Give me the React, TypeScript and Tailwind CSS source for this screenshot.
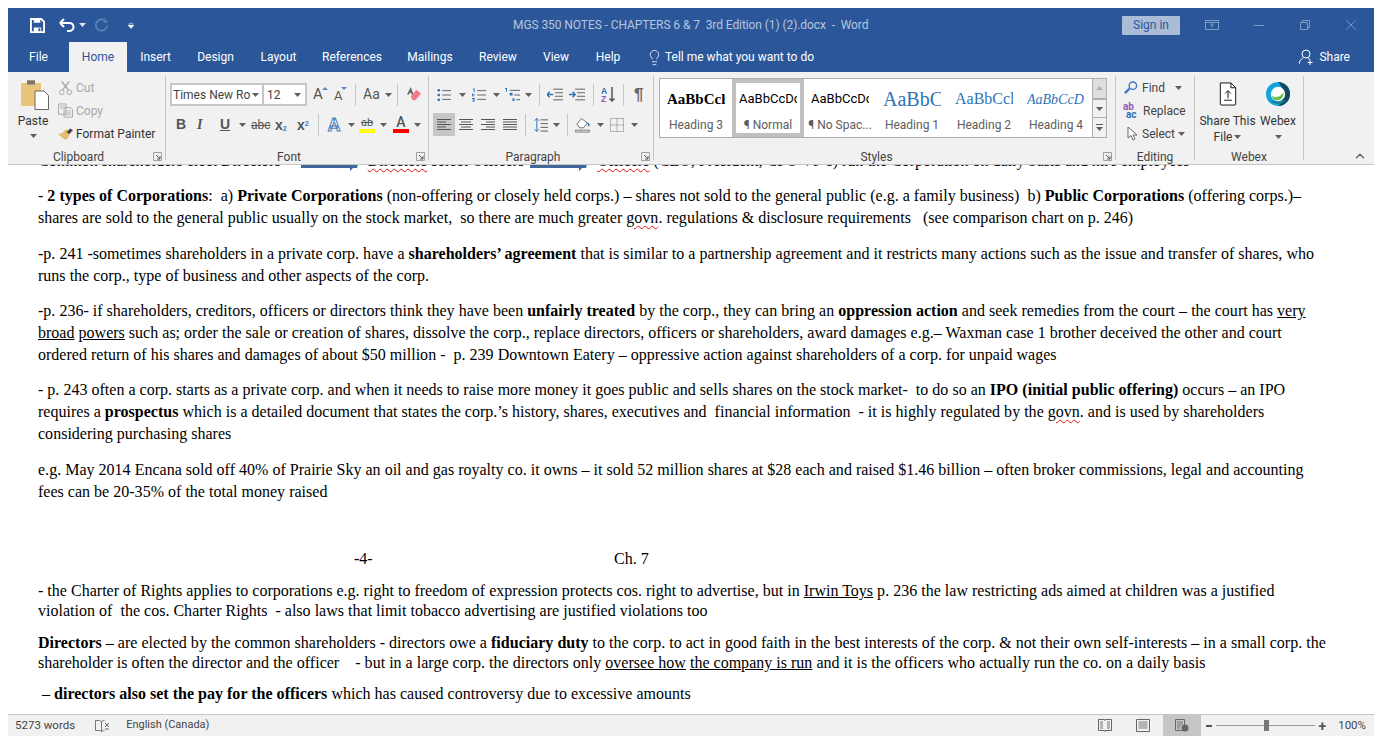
import React from "react";
import { Lightbulb, ChevronUp } from "lucide-react";

const Caret = ({ c = "#5f5f5f" }: { c?: string }) => (
  <svg width="7" height="4" viewBox="0 0 7 4" className="shrink-0"><path d="M0 0h7L3.5 4z" fill={c} /></svg>
);

const Launcher = () => (
  <svg width="9" height="9" viewBox="0 0 9 9" className="shrink-0"><path d="M.5 8.5v-8h8v8z" fill="none" stroke="#a0a0a0" /><path d="M3 3l4 4M7 4v3H4" fill="none" stroke="#5a5a5a" /></svg>
);

const Divider = () => <div className="w-px h-[22px] bg-[#c6c6c6] shrink-0" />;

const GroupLabel = ({ children, launcher }: { children: React.ReactNode; launcher?: boolean }) => (
  <div className={`h-[16px] -mb-[4px] pt-[1px] flex items-center justify-center relative text-[12px] text-[#444] shrink-0 ${launcher ? "pr-[16px]" : ""}`}>
    {children}
    {launcher && <span className="absolute right-[3px] top-[4px] flex"><Launcher /></span>}
  </div>
);

const Group = ({ w, label, launcher, children }: { w: string; label: string; launcher?: boolean; children: React.ReactNode }) => (
  <div className={`${w} shrink-0 flex flex-col border-r border-[#c6c6c6] mt-[4px] mb-[4px]`}>
    <div className="flex-1 min-h-0">{children}</div>
    <GroupLabel launcher={launcher}>{label}</GroupLabel>
  </div>
);

const Lines = ({ x = 0, w = 14, ys, c = "#555" }: { x?: number; w?: number; ys: number[]; c?: string }) => (
  <>{ys.map((y) => <path key={y} d={`M${x} ${y + 0.5}h${w}`} stroke={c} fill="none" />)}</>
);

const StyleItem = ({ sample, label, cls, selected }: { sample: string; label: string; cls: string; selected?: boolean }) => (
  <div className={`w-[72px] shrink-0 flex flex-col items-center overflow-hidden border-[4px] ${selected ? "border-[#c0c0c0]" : "border-transparent"}`}>
    <div className={`h-[34px] w-full flex items-center justify-center overflow-hidden whitespace-nowrap ${cls}`}><span className="block overflow-hidden w-[58px] text-left">{sample}</span></div>
    <div className="text-[12px] text-[#5c5c5c] leading-[16px] mt-[2px] whitespace-nowrap">{label}</div>
  </div>
);

const Tab = ({ children, w }: { children: React.ReactNode; w: string }) => (
  <div className={`h-[30px] flex items-center justify-center text-[12px] whitespace-nowrap text-white ${w}`}>{children}</div>
);

const Arrow = ({ cls }: { cls: string }) => (
  <svg width="57" height="8" viewBox="0 0 57 8" className={`inline-block align-baseline relative top-[6px] ${cls}`}><path d="M0 0h57l-1 4h-4l-3 3V4H0z" fill="#41689b" /></svg>
);

const W = ({ children }: { children: React.ReactNode }) => (
  <span className="underline decoration-wavy decoration-[#e01010] decoration-1 underline-offset-2">{children}</span>
);
const U = ({ children }: { children: React.ReactNode }) => <span className="underline">{children}</span>;
const Line = ({ children }: { children: React.ReactNode }) => <div className="whitespace-pre">{children}</div>;

export default function App() {
  return (
    <div className="w-[1382px] h-[744px] bg-white overflow-hidden pt-[8px] px-[8px] pb-[8px] flex flex-col font-['Roboto','Noto_Sans',sans-serif]">
      {/* Title bar */}
      <div className="h-[34px] bg-[#2b579a] shrink-0 flex items-center relative">
        <div className="flex items-center pl-[22px]">
          <svg width="15" height="15" viewBox="0 0 16 16"><path d="M1 1h11l3 3v11H1z" fill="none" stroke="#fff" strokeWidth="2" /><path d="M4 1h7v4H4zM4 10h8v5H4z" fill="#fff" /><path d="M9 11h2v3H9z" fill="#2b579a" /></svg>
          <svg width="16" height="16" viewBox="0 0 16 16" className="ml-[14px]"><path d="M1 6l4-4M1 6l4 4M1 6h9a4 4 0 0 1 1 8H8" fill="none" stroke="#fff" strokeWidth="2" /></svg>
          <span className="ml-[4px]"><Caret c="#dfe6f0" /></span>
          <svg width="15" height="15" viewBox="0 0 16 16" className="ml-[8px]"><path d="M12 3a6 6 0 1 0 2 5M11 .5V4h3.500" fill="none" stroke="#5a7fb5" strokeWidth="2" /></svg>
          <svg width="6" height="7" viewBox="0 0 7 7" className="ml-[19px]"><path d="M1 1h5M0 3h7L3.500 7z" fill="#fff" stroke="#fff" strokeWidth=".6" /></svg>
        </div>
        <div className="absolute left-[505px] top-[8px] text-[12px] tracking-[-0.08px] text-[#b5c5dd] whitespace-pre">MGS 350 NOTES - CHAPTERS 6 &amp; 7  3rd Edition (1) (2).docx  -  Word</div>
        <div className="ml-auto flex items-center">
          <div className="w-[58px] h-[19px] bg-[#aabcd6] rounded-[1px] text-[#2b579a] text-[12px] flex items-center justify-center">Sign in</div>
          <svg width="14" height="10" viewBox="0 0 14 10" className="ml-[25px]"><path d="M.5.500h13v9H.500zM.500 2.500h13M7 8V4M5 5.500L7 3.500l2 2" fill="none" stroke="#7f9cc6" /></svg>
          <svg width="10" height="1" viewBox="0 0 10 1" className="ml-[35px]"><path d="M0 .5h10" stroke="#7f9cc6" /></svg>
          <svg width="10" height="10" viewBox="0 0 10 10" className="ml-[36px]"><path d="M.5 2.500h7v7h-7zM2.500 2.500v-2h7v7h-2" fill="none" stroke="#7f9cc6" /></svg>
          <svg width="10" height="10" viewBox="0 0 11 11" className="ml-[36px] mr-[18px]"><path d="M.5.500l10 10M10.500.500l-10 10" fill="none" stroke="#7f9cc6" /></svg>
        </div>
      </div>

      {/* Tabs */}
      <div className="h-[30px] bg-[#2b579a] shrink-0 flex items-center">
        <div className="w-[61px] text-center text-white text-[12px]">File</div>
        <div className="w-[58px] h-[30px] bg-[#f1f1f1] text-[#2b579a] text-[12px] flex items-center justify-center">Home</div>
        <Tab w="w-[57px]">Insert</Tab>
        <Tab w="w-[63px]">Design</Tab>
        <Tab w="w-[63px]">Layout</Tab>
        <Tab w="w-[84px]">References</Tab>
        <Tab w="w-[72px]">Mailings</Tab>
        <Tab w="w-[64px]">Review</Tab>
        <Tab w="w-[52px]">View</Tab>
        <Tab w="w-[52px]">Help</Tab>
        <div className="flex items-center text-white text-[12px] ml-[12px] whitespace-nowrap">
          <Lightbulb size={17} strokeWidth={1.1} className="mr-[2px]" />
          Tell me what you want to do
        </div>
        <div className="ml-auto mr-[24px] flex items-center text-white text-[12px]">
          <svg width="15" height="16" viewBox="0 0 15 16" className="mr-[5px]"><circle cx="7" cy="5" r="4" fill="none" stroke="#fff" /><path d="M0 15c.5-3 2-5 4-6M9 9c1 .3 1.500 1 2 2M11 11v5M8.500 13.500h5" fill="none" stroke="#fff" /></svg>
          Share
        </div>
      </div>

      {/* Ribbon */}
      <div className="h-[93px] bg-[#f1f1f1] shrink-0 flex border-b border-[#c6c6c6] text-[12px] text-[#444]">
        {/* Clipboard */}
        <Group w="w-[158px]" label="Clipboard" launcher>
          <div className="flex h-[72px]">
            <div className="w-[50px] flex flex-col items-center pt-[4px]">
              <svg width="28" height="30" viewBox="0 0 28 30" className="ml-[4px]"><path d="M0 3h6V0h8v3h6v23H0z" fill="#e9c57c" /><path d="M6 0.500h8V4.500H6z" fill="#777" /><path d="M14 11h9l4.500 4.500V29.500H14z" fill="#fff" stroke="#666" /></svg>
              <div className="mt-[3px] text-[#333] leading-[16px]">Paste</div>
              <div className="mt-[5px]"><Caret /></div>
            </div>
            <div className="flex flex-col">
              <div className="h-[23px] flex items-center text-[#a8a8a8]">
                <svg width="15" height="16" viewBox="0 0 16 16"><path d="M4 1l7 9M12 1L5 10" stroke="#a5a5a5" fill="none" strokeWidth="1.500" /><circle cx="4" cy="12.500" r="2.500" fill="none" stroke="#a5a5a5" /><circle cx="12" cy="12.500" r="2.500" fill="none" stroke="#a5a5a5" /></svg>
                <span className="ml-[3px]">Cut</span>
              </div>
              <div className="h-[23px] flex items-center text-[#a8a8a8]">
                <svg width="15" height="15" viewBox="0 0 16 15"><path d="M.5.500h8v11h-8zM6.500 4.500h7l2 2v8h-9z" fill="#f1f1f1" stroke="#a5a5a5" /><path d="M8 8h6M8 10h6M8 12h6M2 3h5M2 5h3" stroke="#b5b5b5" /></svg>
                <span className="ml-[3px]">Copy</span>
              </div>
              <div className="h-[23px] flex items-center text-[#333]">
                <svg width="15" height="14" viewBox="0 0 16 14"><path d="M9 2l5 3-4 7-3 1L0 7c3 0 5-1 7-4z" fill="#e6bd74" /><path d="M9 5l4-4 3 2-4 4z" fill="#444" /></svg>
                <span className="ml-[3px]">Format Painter</span>
              </div>
            </div>
          </div>
        </Group>

        {/* Font */}
        <Group w="w-[263px]" label="Font" launcher>
          <div className="flex flex-col pl-[4px] pt-[7px]">
            <div className="flex items-center h-[23px]">
              <div className="w-[94px] h-[23px] bg-white border-2 border-[#c6c6c6] flex items-center pl-[1px] pr-[3px] justify-between"><span className="text-[#444] whitespace-nowrap text-[12px] pt-[1px]">Times New Ro</span><Caret /></div>
              <div className="w-[43px] h-[23px] bg-white border-2 border-l-0 border-[#c6c6c6] flex items-center pl-[3px] pr-[4px] justify-between"><span className="text-[12px] pt-[1px]">12</span><Caret /></div>
              <div className="flex items-center ml-[6px] text-[#555]">
                <span className="text-[15px] leading-none relative w-[21px]">A<svg width="6" height="3" className="absolute left-[9px] top-[0px]"><path d="M0 3l3-3 3 3z" fill="#5b87c5" /></svg></span>
                <span className="text-[13px] leading-none relative w-[21px] mt-[2px]">A<svg width="6" height="3" className="absolute left-[7px] -top-[2px]"><path d="M0 0h6L3 3z" fill="#5b87c5" /></svg></span>
              </div>
              <div className="mr-[7px]"><Divider /></div>
              <span className="text-[14px] text-[#555] w-[22px]">Aa</span>
              <span className="w-[12px]"><Caret /></span>
              <Divider />
              <svg width="15" height="15" viewBox="0 0 16 16" className="ml-[9px]"><path d="M4 0l3 8H5L4 6H3L2 8H0z" fill="#666" /><path d="M4 10l6-7 5 4-6 7H6z" fill="#ee7b8a" /></svg>
            </div>
            <div className="flex items-center h-[23px] mt-[7px] pl-[6px] text-[#555]">
              <span className="w-[21px] font-bold font-['Liberation_Sans',sans-serif] text-[14px]">B</span>
              <span className="w-[23px] italic font-['Liberation_Serif',serif] font-bold text-[14px]">I</span>
              <span className="underline font-bold font-['Liberation_Sans',sans-serif] w-[19px] text-[14px]">U</span>
              <span className="w-[12px]"><Caret /></span>
              <span className="line-through w-[24px] text-[12px] leading-none">abc</span>
              <span className="w-[22px] font-bold font-['Liberation_Sans',sans-serif] text-[14px] leading-none">x<sub className="text-[7px] text-[#3f77c2]">2</sub></span>
              <span className="w-[21px] font-bold font-['Liberation_Sans',sans-serif] text-[14px] leading-none">x<sup className="text-[7px] text-[#3f77c2]">2</sup></span>
              <div className="mr-[9px]"><Divider /></div>
              <span className="font-bold text-[18px] leading-none text-white [-webkit-text-stroke:1px_#4f81bd] w-[20px]">A</span>
              <span className="w-[11px]"><Caret /></span>
              <div className="w-[16px] flex flex-col items-center mr-[5px] relative"><span className="text-[11px] leading-[12px] text-[#555] line-through">ab</span><div className="w-[16px] h-[4px] bg-[#ffff00]" /></div>
              <span className="w-[13px]"><Caret /></span>
              <div className="w-[16px] flex flex-col items-center mr-[5px]"><span className="text-[14px] leading-[13px] font-medium text-[#555]">A</span><div className="w-[16px] h-[4px] bg-[#ff0000]" /></div>
              <Caret />
            </div>
          </div>
        </Group>

        {/* Paragraph */}
        <Group w="w-[225px]" label="Paragraph" launcher>
          <div className="flex flex-col pl-[4px] pt-[7px]">
            <div className="flex items-center h-[23px] pl-[4px]">
              <svg width="14" height="14" viewBox="0 0 16 15"><g fill="#2b6fb8"><circle cx="2" cy="2" r="1.500" /><circle cx="2" cy="7.500" r="1.500" /><circle cx="2" cy="13" r="1.500" /></g><Lines x={6} w={10} ys={[2, 7, 12]} /></svg>
              <span className="ml-[8px] mr-[6px]"><Caret /></span>
              <svg width="14" height="14" viewBox="0 0 16 15"><g fill="#2b6fb8"><path d="M1 0h2v4H2V1H1zM0 6h3v1H1v1h2v1H0zM0 11h3v4H0v-1h2v-.5H1v-1h1V12H0z" /></g><Lines x={6} w={10} ys={[2, 7, 12]} /></svg>
              <span className="ml-[7px] mr-[5px]"><Caret /></span>
              <svg width="16" height="14" viewBox="0 0 17 15"><g fill="#2b6fb8"><path d="M0 0h2v4H1V1H0zM5 5h3v3H5zM8 11h2v3H8z" /></g><Lines x={5} w={11} ys={[2]} /><Lines x={10} w={6} ys={[7]} /><Lines x={12} w={4} ys={[12]} /></svg>
              <span className="ml-[4px] mr-[7px]"><Caret /></span>
              <Divider />
              <svg width="16" height="13" viewBox="0 0 18 13" className="ml-[7px]"><Lines x={7} w={11} ys={[0, 12]} /><Lines x={9} w={9} ys={[4, 8]} /><path d="M0 6.500h7M3 3.500L0 6.500l3 3" fill="none" stroke="#2b6fb8" strokeWidth="1.500" /></svg>
              <svg width="16" height="13" viewBox="0 0 18 13" className="ml-[6px] mr-[8px]"><Lines x={7} w={11} ys={[0, 12]} /><Lines x={9} w={9} ys={[4, 8]} /><path d="M0 6.500h7M4 3.500l3 3-3 3" fill="none" stroke="#2b6fb8" strokeWidth="1.500" /></svg>
              <Divider />
              <svg width="15" height="17" viewBox="0 0 15 17" className="ml-[7px]"><path d="M11 1v14M8.500 12.500L11 15l2.500-2.500" fill="none" stroke="#555" strokeWidth="1.500" /><text x="0" y="7.500" fontSize="8.500" fontWeight="700" fill="#2b6fb8" fontFamily="Liberation Sans">A</text><text x="0" y="16" fontSize="8.500" fontWeight="700" fill="#8e5bb5" fontFamily="Liberation Sans">Z</text></svg>
              <div className="ml-[7px] mr-[10px]"><Divider /></div>
              <span className="text-[17px] leading-none text-[#666] font-['Liberation_Sans',sans-serif] font-bold">¶</span>
            </div>
            <div className="flex items-center h-[23px] mt-[7px]">
              <div className="w-[22px] h-[23px] bg-[#c6c6c6] flex items-center justify-center"><svg width="14" height="11" viewBox="0 0 14 11"><Lines w={14} ys={[0, 5, 10]} /><Lines w={9} ys={[2.500, 7.500]} /></svg></div>
              <svg width="14" height="11" viewBox="0 0 14 11" className="ml-[4px]"><Lines w={14} ys={[0, 5, 10]} /><Lines x={2} w={10} ys={[2.500, 7.500]} /></svg>
              <svg width="14" height="11" viewBox="0 0 14 11" className="ml-[8px]"><Lines w={14} ys={[0, 5, 10]} /><Lines x={5} w={9} ys={[2.500, 7.500]} /></svg>
              <svg width="14" height="11" viewBox="0 0 14 11" className="ml-[8px] mr-[8px]"><Lines w={14} ys={[0, 2.500, 5, 7.500, 10]} /></svg>
              <Divider />
              <svg width="14" height="16" viewBox="0 0 15 16" className="ml-[8px]"><path d="M3 1v14M.5 3.500L3 1l2.500 2.500M.5 12.500L3 15l2.500-2.500" fill="none" stroke="#2b6fb8" /><Lines x={7} w={8} ys={[2, 6, 10, 14]} /></svg>
              <span className="ml-[5px] mr-[7px]"><Caret /></span>
              <Divider />
              <svg width="16" height="16" viewBox="0 0 17 16" className="ml-[7px]"><path d="M7 1l6 5-4 5H5L2 7z" fill="#fff" stroke="#666" /><path d="M13 5c2 1 3 3 2 5-1-1-2-3-2-5z" fill="#2b6fb8" /><path d="M.5 13.500h15v2H.500z" fill="none" stroke="#777" /></svg>
              <span className="ml-[6px] mr-[6px]"><Caret /></span>
              <svg width="14" height="14" viewBox="0 0 14 14"><path d="M.5.500h13v13H.500zM7 .500v13M.500 7h13" fill="none" stroke="#777" strokeDasharray="1 1" /></svg>
              <span className="ml-[7px]"><Caret /></span>
            </div>
          </div>
        </Group>

        {/* Styles */}
        <Group w="w-[462px]" label="Styles" launcher>
          <div className="flex pl-[5px] pt-[2px]">
            <div className="h-[60px] bg-white border border-[#aeaeae] flex">
              <StyleItem sample="AaBbCcl" label="Heading 3" cls="font-['Liberation_Serif',serif] font-bold text-[15px] text-black" />
              <StyleItem selected sample="AaBbCcDc" label="¶ Normal" cls="text-[13px] text-black" />
              <StyleItem sample="AaBbCcDc" label="¶ No Spac..." cls="text-[13px] text-black" />
              <StyleItem sample="AaBbC" label="Heading 1" cls="font-['Liberation_Serif',serif] text-[20px] text-[#2e74b5]" />
              <StyleItem sample="AaBbCcl" label="Heading 2" cls="font-['Liberation_Serif',serif] text-[16px] text-[#2e74b5]" />
              <StyleItem sample="AaBbCcD" label="Heading 4" cls="font-['Liberation_Serif',serif] italic text-[14px] text-[#2e74b5]" />
              <div className="w-[14px] border-l border-[#aeaeae] flex flex-col bg-[#f1f1f1]">
                <div className="h-[20px] bg-[#dedede] flex items-center justify-center border-t border-[#aeaeae] rotate-180"><Caret c="#b0b0b0" /></div>
                <div className="h-[19px] flex items-center justify-center border-b border-t border-[#aeaeae]"><Caret /></div>
                <div className="flex-1 flex flex-col items-center justify-center gap-[2px]"><div className="w-[7px] h-px bg-[#5f5f5f]" /><Caret /></div>
              </div>
            </div>
          </div>
        </Group>

        {/* Editing */}
        <Group w="w-[79px]" label="Editing">
          <div className="flex flex-col pl-[7px]">
            <div className="h-[23px] flex items-center text-[#444]">
              <svg width="14" height="14" viewBox="0 0 15 15" className="ml-[1px]"><circle cx="9.500" cy="5" r="4" fill="none" stroke="#3f77c2" strokeWidth="1.500" /><path d="M6 8L1 13" stroke="#3f77c2" strokeWidth="2.500" /></svg>
              <span className="ml-[4px]">Find</span>
              <span className="ml-[10px]"><Caret /></span>
            </div>
            <div className="h-[23px] flex items-center text-[#444]">
              <span className="w-[16px] text-[10px] leading-[8px] font-bold"><span className="text-[#8e5bb5] block">ab</span><span className="text-[#2b6fb8] block pl-[3px]">ac</span></span>
              <span className="ml-[4px]">Replace</span>
            </div>
            <div className="h-[23px] flex items-center text-[#444]">
              <svg width="11" height="15" viewBox="0 0 11 15" className="ml-[4px]"><path d="M1 1v11l3-2.500 2 4.500 2-1-2-4h4z" fill="#fff" stroke="#666" /></svg>
              <span className="ml-[4px]">Select</span>
              <span className="ml-[3px]"><Caret /></span>
            </div>
          </div>
        </Group>

        {/* Webex */}
        <Group w="w-[109px]" label="Webex">
          <div className="flex pt-[6px] leading-[16px] text-[#333]">
            <div className="w-[65px] flex flex-col items-center">
              <svg width="18" height="24" viewBox="0 0 18 25"><path d="M1 1h11l5 5v17a1 1 0 0 1-1 1H2a1 1 0 0 1-1-1z" fill="#fff" stroke="#111" /><path d="M12 1v5h5M9 17V9M6 12l3-3 3 3M5 19h8" fill="none" stroke="#111" /></svg>
              <div className="mt-[7px] whitespace-nowrap">Share This</div>
              <div className="flex items-center gap-[2px]">File<Caret /></div>
            </div>
            <div className="w-[36px] flex flex-col items-center">
              <svg width="24" height="24" viewBox="0 0 25 25"><circle cx="12.500" cy="12.500" r="12.500" fill="#10a5dd" /><path d="M12.500 0a12.500 12.500 0 0 1 0 25C18 22 22 10 12.500 0z" fill="#12495f" /><path d="M3 18c4 5 12 7 18 1-6 1-14 2-18-1z" fill="#1e7d8f" /><circle cx="12.500" cy="12.500" r="7.500" fill="#fff" /><path d="M6 14c3 3 9 2 12-3 1 4-2 8-6 8s-6-3-6-5z" fill="#6cbf4b" /></svg>
              <div className="mt-[7px]">Webex</div>
              <div className="mt-[6px]"><Caret /></div>
            </div>
          </div>
        </Group>

        <div className="flex-1 flex items-end justify-end pr-[7px] pb-[1px]"><ChevronUp size={14} strokeWidth={2.500} className="text-[#666]" /></div>
      </div>

      {/* Document */}
      <div className="h-[549px] shrink-0 bg-white overflow-hidden pl-[30px] text-[16px] leading-[22px] tracking-[0.015px] text-black font-['Liberation_Serif',serif]">
        <div className="-mt-[15px] whitespace-pre">
          <span>Common shareholders elect Directors</span>
          <Arrow cls="ml-[20px] mr-[10px]" />
          <W>Directors</W><span> select Officers</span>
          <Arrow cls="ml-[6px] mr-[10px]" />
          <W>Officers</W><span> (CEO, President, CFO VP’s) run the Corporation on daily basis and hire employees</span>
        </div>
        <div className="mt-[13px]">
          <Line>- <b>2 types of Corporations</b>:  a) <b>Private Corporation</b><b>s</b> (non-offering or closely held corps.) – shares not sold to the general public (e.g. a family business)  b) <b>Public Corporation</b><b>s</b> (offering corps.)–</Line>
          <Line>shares are sold to the general public usually on the stock market,  so there are much greater <W>govn</W>. regulations &amp; disclosure requirements   (see comparison chart on p. 246)</Line>
        </div>
        <div className="mt-[14px]">
          <Line>-p. 241 -sometimes shareholders in a private corp. have a <b>shareholders’ agreement</b> that is similar to a partnership agreement and it restricts many actions such as the issue and transfer of shares, who</Line>
          <Line>runs the corp., type of business and other aspects of the corp.</Line>
        </div>
        <div className="mt-[13px]">
          <Line>-p. 236- if shareholders, creditors, officers or directors think they have been <b>unfairly treated</b> by the corp., they can bring an <b>oppression action</b> and seek remedies from the court – the court has <U>very</U></Line>
          <Line><U>broad</U> <U>powers</U> such as; order the sale or creation of shares, dissolve the corp., replace directors, officers or shareholders, award damages e.g.– Waxman case 1 brother deceived the other and court</Line>
          <Line>ordered return of his shares and damages of about $50 million -  p. 239 Downtown Eatery – oppressive action against shareholders of a corp. for unpaid wages</Line>
        </div>
        <div className="mt-[13px]">
          <Line>- p. 243 often a corp. starts as a private corp. and when it needs to raise more money it goes public and sells shares on the stock market-  to do so an <b>IPO (initial public offering)</b> occurs – an IPO</Line>
          <Line>requires a <b>prospectus</b> which is a detailed document that states the corp.’s history, shares, executives and  financial information  - it is highly regulated by the <W>govn</W>. and is used by shareholders</Line>
          <Line>considering purchasing shares</Line>
        </div>
        <div className="mt-[14px]">
          <Line>e.g. May 2014 Encana sold off 40% of Prairie Sky an oil and gas royalty co. it owns – it sold 52 million shares at $28 each and raised $1.46 billion – often broker commissions, legal and accounting</Line>
          <Line>fees can be 20-35% of the total money raised</Line>
        </div>
        <div className="mt-[45px] flex">
          <span className="ml-[316px] w-[260px]">-4-</span>
          <span>Ch. 7</span>
        </div>
        <div className="mt-[11px] leading-[20px]">
          <Line>- the Charter of Rights applies to corporations e.g. right to freedom of expression protects cos. right to advertise, but in <U>Irwin Toys</U> p. 236 the law restricting ads aimed at children was a justified</Line>
          <Line>violation of  the cos. Charter Rights  - also laws that limit tobacco advertising are justified violations too</Line>
        </div>
        <div className="mt-[12px] leading-[20px]">
          <Line><b>Directors</b> – are elected by the common shareholders - directors owe a <b>fiduciary duty</b> to the corp. to act in good faith in the best interests of the corp. &amp; not their own self-interests – in a small corp. the</Line>
          <Line>shareholder is often the director and the officer    - but in a large corp. the directors only <U>oversee how</U> <U>the company is run</U> and it is the officers who actually run the co. on a daily basis</Line>
        </div>
        <div className="mt-[10px]">
          <Line> – <b>directors also set the pay for the officers</b> which has caused controversy due to excessive amounts</Line>
        </div>
      </div>

      {/* Status bar */}
      <div className="h-[22px] shrink-0 bg-[#f1f1f1] border-t border-[#c6c6c6] flex items-center text-[11.5px] text-[#444]">
        <span className="ml-[7px]">5273 words</span>
        <svg width="15" height="13" viewBox="0 0 15 13" className="ml-[20px]"><path d="M.5 1.500h4l2 1v10l-2-1h-4zM6.500 2.500l2-1h1M6.500 12.500l2-1h1" fill="none" stroke="#777" /><path d="M10 4l4 4M14 4l-4 4M10 10h4" stroke="#666" fill="none" /></svg>
        <span className="ml-[16px] text-[11px]">English (Canada)</span>
        <div className="ml-auto flex items-center h-full">
          <svg width="14" height="13" viewBox="0 0 14 13"><path d="M.5.500h6l.5 1 .5-1h6v11h-6l-.5 1-.5-1h-6z" fill="none" stroke="#666" /><path d="M2 3h3M2 5h3M2 7h3M2 9h3M9 3h3M9 5h3M9 7h3M9 9h3" stroke="#777" /></svg>
          <svg width="14" height="13" viewBox="0 0 14 13" className="ml-[24px]"><path d="M.5.500h13v12H.500z" fill="none" stroke="#666" /><path d="M2.500 3h9M2.500 5h9M2.500 7h9M2.500 9h9" stroke="#777" /></svg>
          <div className="w-[38px] h-full bg-[#c6c6c6] ml-[13px] flex items-center justify-center">
            <svg width="14" height="13" viewBox="0 0 14 13"><path d="M.5.500h9v11h-9z" fill="none" stroke="#666" /><path d="M2 3h6M2 5h6M2 7h4M2 9h3" stroke="#777" /><circle cx="10" cy="9" r="3.500" fill="#666" /></svg>
          </div>
          <div className="w-[6px] h-[2px] bg-[#555] ml-[5px]" />
          <div className="w-[99px] h-px bg-[#999] ml-[4px] relative"><div className="absolute left-[48px] -top-[5px] w-[5px] h-[11px] bg-[#777]" /></div>
          <span className="ml-[4px] text-[#555] text-[14px] font-bold leading-none">+</span>
          <span className="ml-[12px] mr-[8px]">100%</span>
        </div>
      </div>
    </div>
  );
}
